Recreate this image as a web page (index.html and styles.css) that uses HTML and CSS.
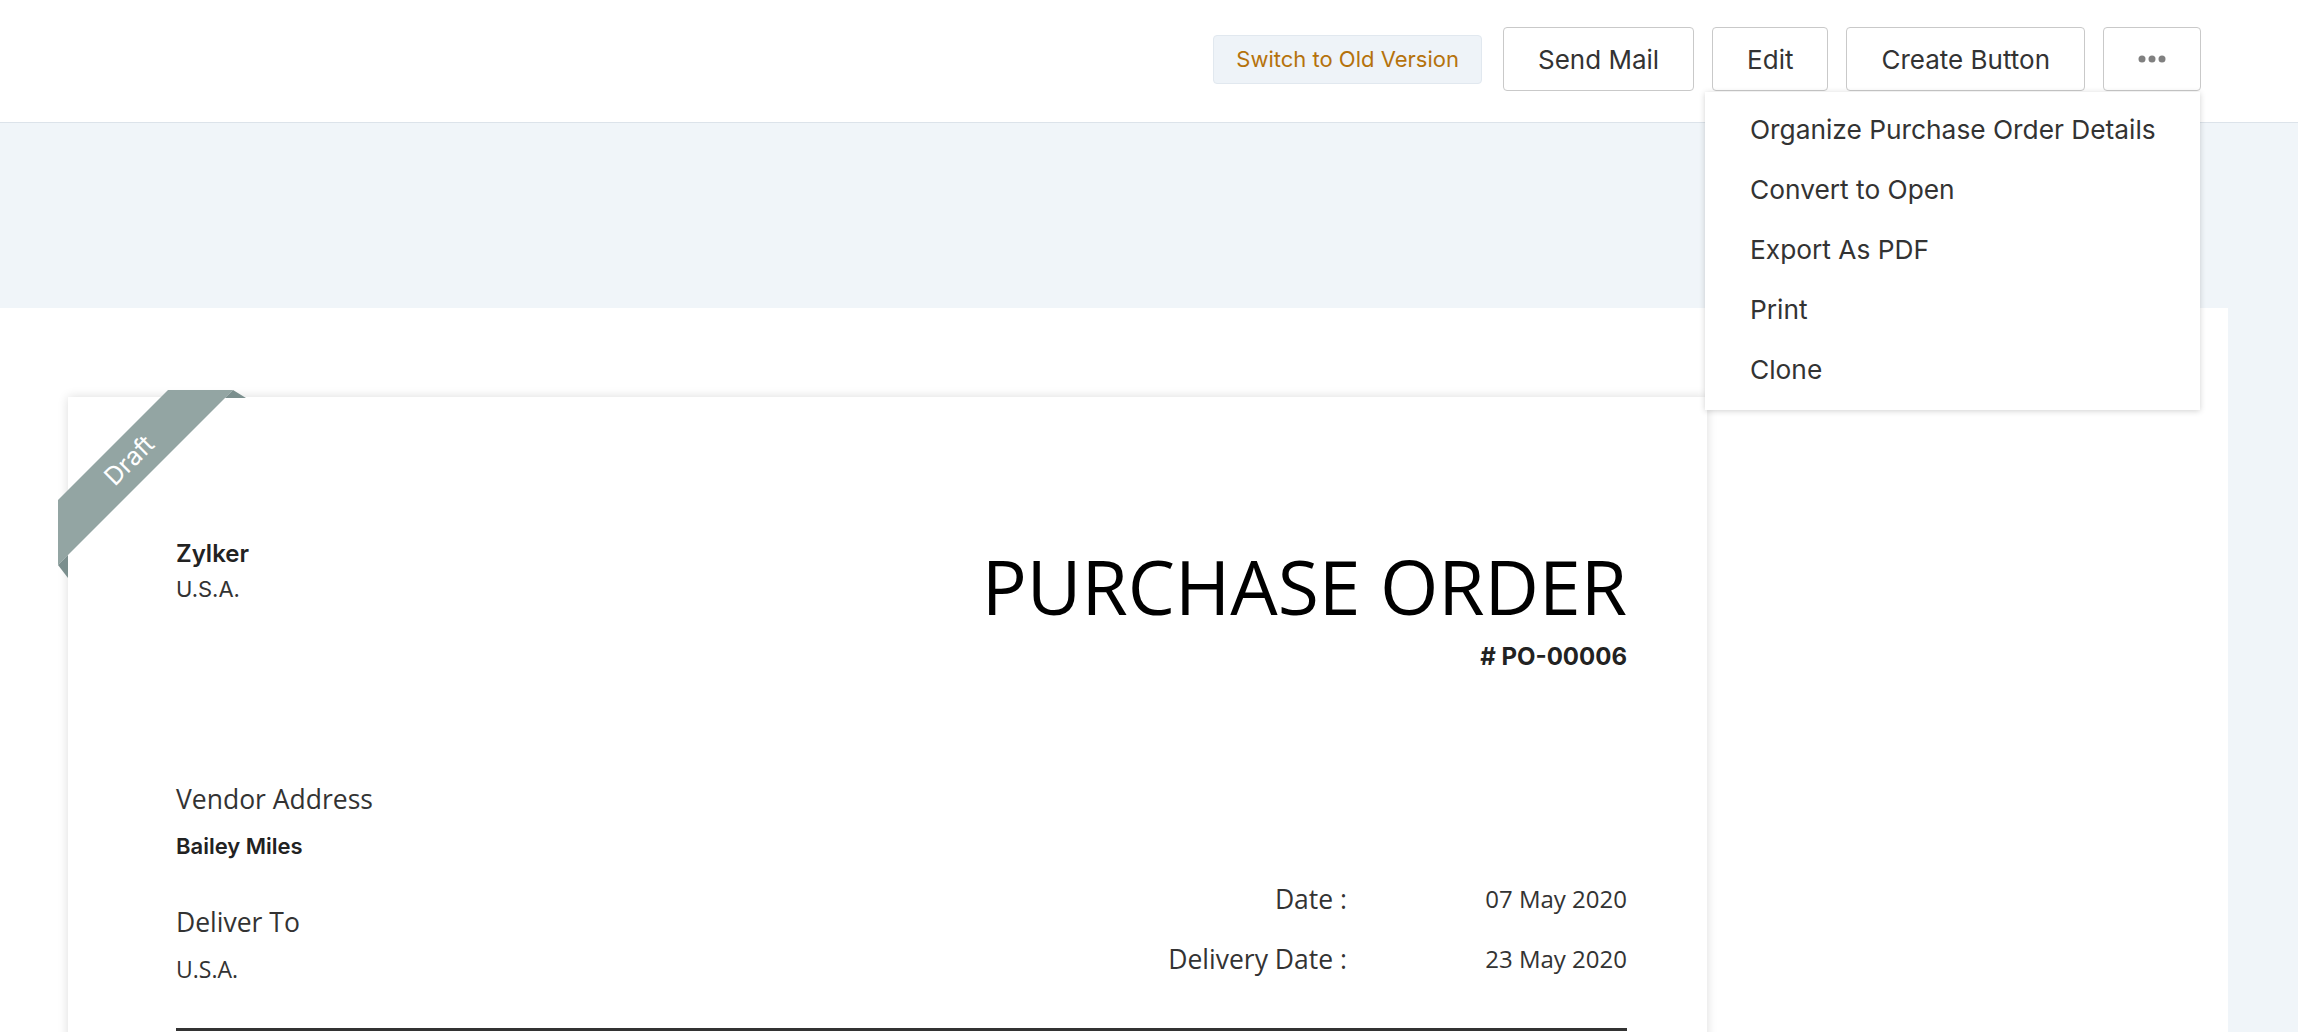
FILE: index.html
```html
<!DOCTYPE html>
<html lang="en">
<head>
<meta charset="utf-8">
<title>Purchase Order</title>
<link rel="stylesheet" href="styles.css">
</head>
<body>
<header class="topbar">
  <div class="actions">
    <button class="btn-switch">Switch to Old Version</button>
    <button class="btn">Send Mail</button>
    <button class="btn">Edit</button>
    <button class="btn">Create Button</button>
    <div class="more-wrap">
      <button class="btn btn-more" aria-label="More">
        <svg class="dots" width="28" height="8" viewBox="0 0 28 8"><circle cx="4" cy="4" r="3.5"/><circle cx="14" cy="4" r="3.5"/><circle cx="24" cy="4" r="3.5"/></svg>
      </button>
      <ul class="menu">
        <li>Organize Purchase Order Details</li>
        <li>Convert to Open</li>
        <li>Export As PDF</li>
        <li>Print</li>
        <li>Clone</li>
      </ul>
    </div>
  </div>
</header>
<div class="band"></div>
<main class="panel">
  <div class="card">
    <div class="ribbon">
      <svg width="190" height="190" viewBox="0 0 190 190">
        <polygon class="rib-band" points="110,0 175,0 0,175 0,110"/>
        <polygon class="rib-fold" points="175,0 188,8 167,8"/>
        <polygon class="rib-fold" points="0,175 10,165 10,188"/>
        <text class="rib-text" x="71" y="70" transform="rotate(-45 71 70)" text-anchor="middle" dominant-baseline="central">Draft</text>
      </svg>
    </div>
    <div class="doc-head">
      <div class="company">
        <div class="company-name">Zylker</div>
        <div class="company-country">U.S.A.</div>
      </div>
      <div class="title-block">
        <h1 class="title">PURCHASE ORDER</h1>
        <div class="po-number"># PO-00006</div>
      </div>
    </div>
    <div class="doc-body">
      <div class="addresses">
        <div class="addr-label">Vendor Address</div>
        <div class="addr-name">Bailey Miles</div>
        <div class="addr-label deliver">Deliver To</div>
        <div class="addr-line">U.S.A.</div>
      </div>
      <div class="dates">
        <div class="date-label">Date :</div>
        <div class="date-value">07 May 2020</div>
        <div class="date-label">Delivery Date :</div>
        <div class="date-value">23 May 2020</div>
      </div>
    </div>
    <hr class="rule">
  </div>
</main>
</body>
</html>
```

FILE: styles.css
```css
* { box-sizing: border-box; }
html, body { margin: 0; overflow: hidden; }
body {
  background: #f0f5f9;
  font-family: Inter, "Liberation Sans", sans-serif;
  color: #333;
}

.topbar {
  height: 123px;
  background: #fff;
  border-bottom: 1px solid #dce3ea;
  display: flex;
  justify-content: flex-end;
  padding: 27px 97px 0 0;
}
.actions {
  display: flex;
  align-items: center;
  gap: 18px;
  height: 64px;
}
.btn {
  height: 64px;
  padding: 0 34px;
  background: #fff;
  border: 1px solid #c9c9c9;
  border-radius: 4px;
  font-family: Inter, "Liberation Sans", sans-serif;
  font-size: 26px;
  color: #333;
}
.btn-switch {
  height: 49px;
  padding: 0 22px;
  margin-right: 3px;
  background: #eef3f8;
  border: 1px solid #e1e8ef;
  border-radius: 4px;
  font-family: Inter, "Liberation Sans", sans-serif;
  font-size: 22px;
  color: #b5720c;
}
.more-wrap { position: relative; }
.btn-more {
  width: 98px;
  padding: 0;
  display: flex;
  align-items: center;
  justify-content: center;
}
.dots circle { fill: #808080; }
.menu {
  position: absolute;
  right: 1px;
  top: 65px;
  width: 495px;
  margin: 0;
  padding: 8px 0 10px;
  list-style: none;
  background: #fff;
  box-shadow: 0 1px 6px rgba(0, 0, 0, 0.18);
  z-index: 10;
}
.menu li {
  height: 60px;
  line-height: 60px;
  padding-left: 45px;
  font-size: 26.3px;
  color: #333;
  white-space: nowrap;
}

.band { height: 185px; }

.panel {
  background: #fff;
  margin-right: 70px;
  padding: 89px 0 0 68px;
  height: 1000px;
}
.card {
  position: relative;
  width: 1639px;
  min-height: 900px;
  background: #fff;
  box-shadow: 0 0 10px rgba(0, 0, 0, 0.14);
  padding: 139px 80px 0 108px;
}
.ribbon {
  position: absolute;
  left: -10px;
  top: -7px;
  width: 190px;
  height: 190px;
}
.ribbon svg { display: block; }
.rib-band { fill: #93a5a3; }
.rib-fold { fill: #7b8f8e; }
.rib-text {
  fill: #fff;
  font-family: Inter, "Liberation Sans", sans-serif;
  font-size: 25px;
}

.doc-head {
  display: flex;
  justify-content: space-between;
  align-items: flex-start;
}
.company-name {
  font-weight: 600;
  font-size: 24px;
  line-height: 36px;
  color: #222;
}
.company-country {
  font-size: 22px;
  line-height: 35px;
  color: #333;
}
.title-block {
  text-align: right;
  margin-top: 10px;
}
.title {
  margin: 0;
  font-family: "Open Sans", "Liberation Sans", sans-serif;
  font-weight: 400;
  font-size: 75px;
  line-height: 80px;
  color: #000;
}
.po-number {
  margin-top: 13px;
  font-weight: 700;
  font-size: 24px;
  line-height: 36px;
  color: #222;
}

.doc-body {
  display: flex;
  justify-content: space-between;
  margin-top: 104px;
}
.addr-label {
  font-family: "Open Sans", "Liberation Sans", sans-serif;
  font-size: 26.5px;
  line-height: 40px;
  color: #333;
}
.addr-label.deliver { margin-top: 39px; }
.addr-name {
  margin-top: 10px;
  font-weight: 600;
  font-size: 22px;
  line-height: 34px;
  color: #222;
}
.addr-line {
  margin-top: 10px;
  font-family: "Open Sans", "Liberation Sans", sans-serif;
  font-size: 23px;
  line-height: 34px;
  color: #333;
}
.dates {
  display: grid;
  grid-template-columns: auto 280px;
  row-gap: 12px;
  margin-top: 100px;
  font-family: "Open Sans", "Liberation Sans", sans-serif;
  line-height: 40px;
  color: #333;
  text-align: right;
}
.date-label { font-size: 26.5px; }
.date-value { font-size: 24px; }
.rule {
  border: 0;
  border-top: 3px solid #333;
  margin: 42px 0 0;
}
```
